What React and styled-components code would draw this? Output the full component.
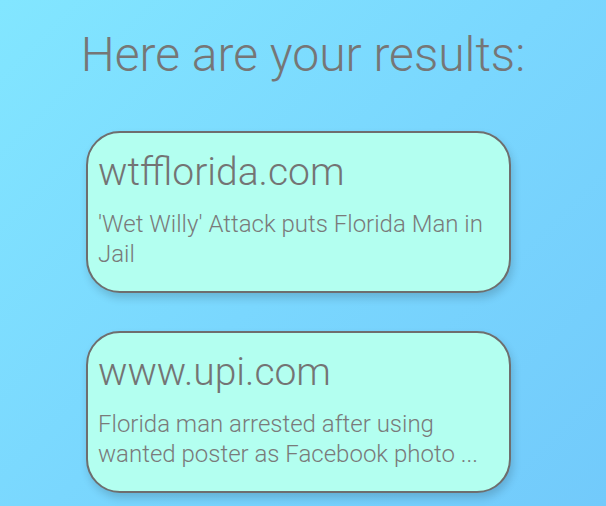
import React from "react";
import styled, { createGlobalStyle } from "styled-components";

const RESULTS = [
  {
    site: "wtfflorida.com",
    headline: "'Wet Willy' Attack puts Florida Man in Jail"
  },
  {
    site: "www.upi.com",
    headline: "Florida man arrested after using\nwanted poster as Facebook photo ..."
  }
];

const GlobalStyle = createGlobalStyle`
  html, body {
    margin: 0;
    padding: 0;
  }

  body {
    min-height: 100vh;
    background: linear-gradient(135deg, #82e6ff 0%, #7ad7fe 50%, #72cafb 100%);
    font-family: Roboto, "Open Sans", sans-serif;
    font-weight: 300;
    color: #75777a;
  }
`;

function App() {
  return (
    <Page>
      <GlobalStyle />
      <Heading>Here are your results:</Heading>
      <List>
        {RESULTS.map(result => (
          <Card key={result.site}>
            <Site>{result.site}</Site>
            <Headline>{result.headline}</Headline>
          </Card>
        ))}
      </List>
    </Page>
  );
}

const Page = styled.div`
  display: flex;
  flex-direction: column;
  align-items: center;
  padding-top: 26px;
`;

const Heading = styled.h1`
  margin: 0;
  font-size: 48px;
  font-weight: 300;
  line-height: 58px;
  color: #767676;
`;

const List = styled.div`
  display: flex;
  flex-direction: column;
  gap: 38px;
  margin-top: 47px;
  margin-right: 9px;
`;

const Card = styled.div`
  box-sizing: border-box;
  width: 425px;
  padding: 17px 12px 22px 10px;
  background: #b3fff0;
  border: 2px solid #6e6e6e;
  border-radius: 34px;
  box-shadow: 2px 5px 9px rgba(0, 0, 0, 0.16);
`;

const Site = styled.h2`
  margin: 0;
  font-size: 39px;
  font-weight: 300;
  line-height: 44px;
  color: #747474;
`;

const Headline = styled.p`
  margin: 15px 0 0;
  font-size: 24px;
  line-height: 30px;
  white-space: pre-line;
  color: #7a7a7a;
`;

export default App;
